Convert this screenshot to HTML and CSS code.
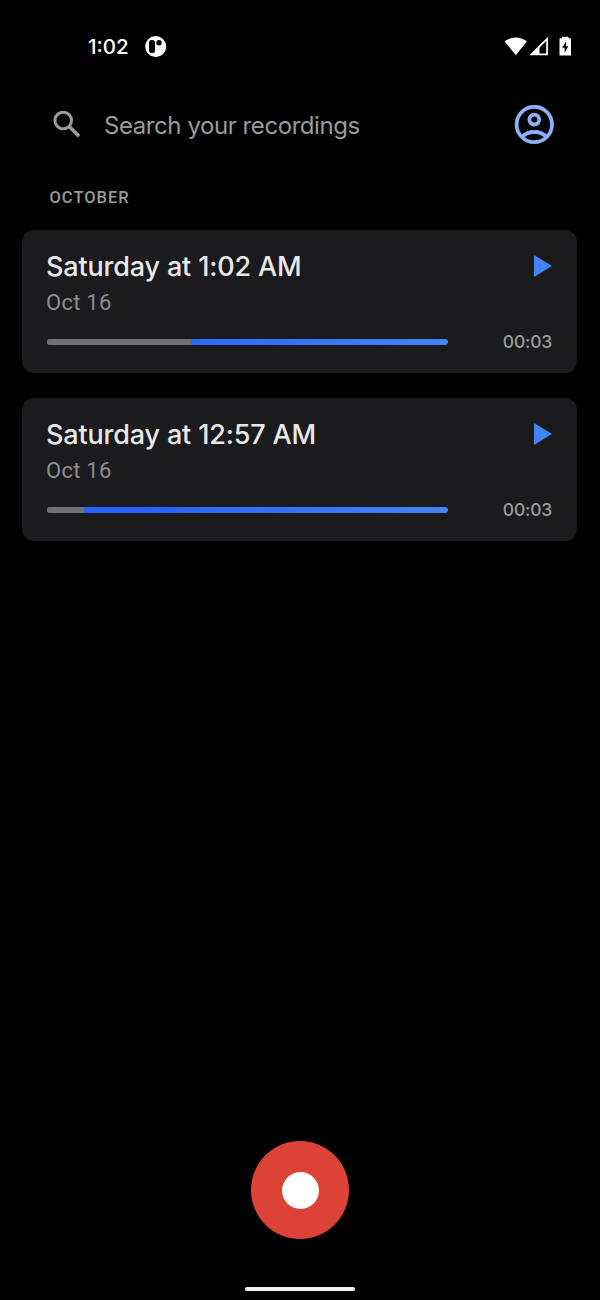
FILE: index.html
```html
<!DOCTYPE html>
<html lang="en">
<head>
<meta charset="utf-8">
<title>Recorder</title>
<link rel="stylesheet" href="styles.css">
</head>
<body>
<div class="screen">
  <div class="status">
    <span class="clock">1:02</span>
    <svg class="app-icon" width="22" height="22" viewBox="0 0 22 22"><circle cx="10.700" cy="10.600" r="10.500" fill="#fff"/><rect x="4" y="4" width="6" height="13" rx="2.800" fill="#000"/><circle cx="14" cy="6.800" r="2.700" fill="#000"/></svg>
    <div class="indicators">
      <svg width="70" height="22" viewBox="0 0 70 22" fill="#fff">
        <path d="M.5 5.2Q11.800 -2.400 23 5.200L11.800 19.200Z"/>
        <path fill-rule="evenodd" d="M25.300 19.300L44 0.800V19.300ZM35.500 11.800V17.500H42.200V5Z"/>
        <path fill-rule="evenodd" d="M58 .7V2.300H55.500V19.500H67V2.300H64.500V.7ZM62 5.500L58.200 11.800H60.600V16.500L64.400 10.200H62Z"/>
      </svg>
    </div>
  </div>
  <header class="search">
    <svg class="glass" width="28" height="28" viewBox="0 0 28 28" fill="none" stroke="#9b9b9e" stroke-width="3"><circle cx="10.200" cy="9.500" r="8.300"/><path d="M16 15.300L26 25.300" stroke-width="3.600"/></svg>
    <span class="placeholder">Search your recordings</span>
    <svg class="avatar" width="40" height="40" viewBox="0 0 40 40" fill="none" stroke="#8ab0fa" stroke-width="3.800"><circle cx="20.300" cy="19.500" r="17.700"/><circle cx="20.300" cy="14.600" r="4.900"/><path d="M8 32Q12.500 27 20.300 27T32.600 32"/></svg>
  </header>
  <h2 class="month">OCTOBER</h2>
  <main class="list">
    <article class="card">
      <div class="row"><span class="title">Saturday at 1:02 AM</span><svg class="play" width="18" height="22" viewBox="0 0 18 22"><path d="M0 0L18 11L0 22Z" fill="#4285f4"/></svg></div>
      <div class="date">Oct 16</div>
      <div class="row"><div class="track"><div class="quiet" style="width:144.500px"></div></div><span class="time">00:03</span></div>
    </article>
    <article class="card">
      <div class="row"><span class="title">Saturday at 12:57 AM</span><svg class="play" width="18" height="22" viewBox="0 0 18 22"><path d="M0 0L18 11L0 22Z" fill="#4285f4"/></svg></div>
      <div class="date">Oct 16</div>
      <div class="row"><div class="track"><div class="quiet" style="width:37px"></div></div><span class="time">00:03</span></div>
    </article>
  </main>
  <footer class="footer">
    <div class="record"><div class="dot"></div></div>
    <div class="handle"></div>
  </footer>
</div>
</body>
</html>
```
FILE: styles.css
```css
body { margin: 0; background: #000; }
* { box-sizing: border-box; }
svg { display: block; flex: none; }
.screen { width: 600px; height: 1300px; display: flex; flex-direction: column; background: #000; color: #e8e8ea; font-family: Inter, "Liberation Sans", sans-serif; white-space: nowrap; overflow: hidden; }
.status { height: 93px; display: flex; align-items: center; padding: 0 26px 0 88px; }
.clock { width: 57px; font-size: 20.500px; font-weight: 500; color: #fff; letter-spacing: 0; line-height: 24px; }
.indicators { margin-left: auto; }
.search { height: 63px; display: flex; align-items: center; padding: 0 46px 0 53px; }
.glass { margin-right: 23px; }
.placeholder { flex: 1; color: #9b9b9e; font-size: 24px; line-height: 32px; letter-spacing: -.43px; padding-top: 2px; }
.month { margin: 0; padding: 31px 0 0 49.500px; height: 73.600px; font: 500 16.500px/22px Roboto, sans-serif; letter-spacing: 1px; color: #99999c; }
.list { padding: 0 23px 0 22px; display: flex; flex-direction: column; gap: 25px; }
.card { height: 143px; border-radius: 12px; background: #1b1a1d; padding: 20.400px 25px 0 24.500px; }
.row { display: flex; align-items: center; justify-content: space-between; }
.title { font-size: 27px; font-weight: 500; line-height: 34px; letter-spacing: -.17px; margin-left: -.5px; }
.play { margin-bottom: 2px; }
.date { font: 400 22px/28px Roboto, sans-serif; letter-spacing: .25px; color: #8e8e91; margin: 5px 0 14px -.5px; }
.track { width: 401px; height: 6px; border-radius: 3px; overflow: hidden; background: linear-gradient(90deg, #2962ff 25%, #4285f4); }
.quiet { height: 100%; background: #717073; }
.time { font-size: 17.500px; font-weight: 500; line-height: 22px; letter-spacing: -.2px; color: #9b9b9e; }
.footer { margin-top: auto; height: 159px; display: flex; flex-direction: column; align-items: center; }
.record { width: 98px; height: 98px; border-radius: 50%; background: #dc4236; display: grid; place-items: center; }
.dot { width: 37px; height: 37px; border-radius: 50%; background: #fff; }
.handle { margin-top: 48px; width: 110px; height: 3.500px; border-radius: 2px; background: #f2f2f2; }
```
